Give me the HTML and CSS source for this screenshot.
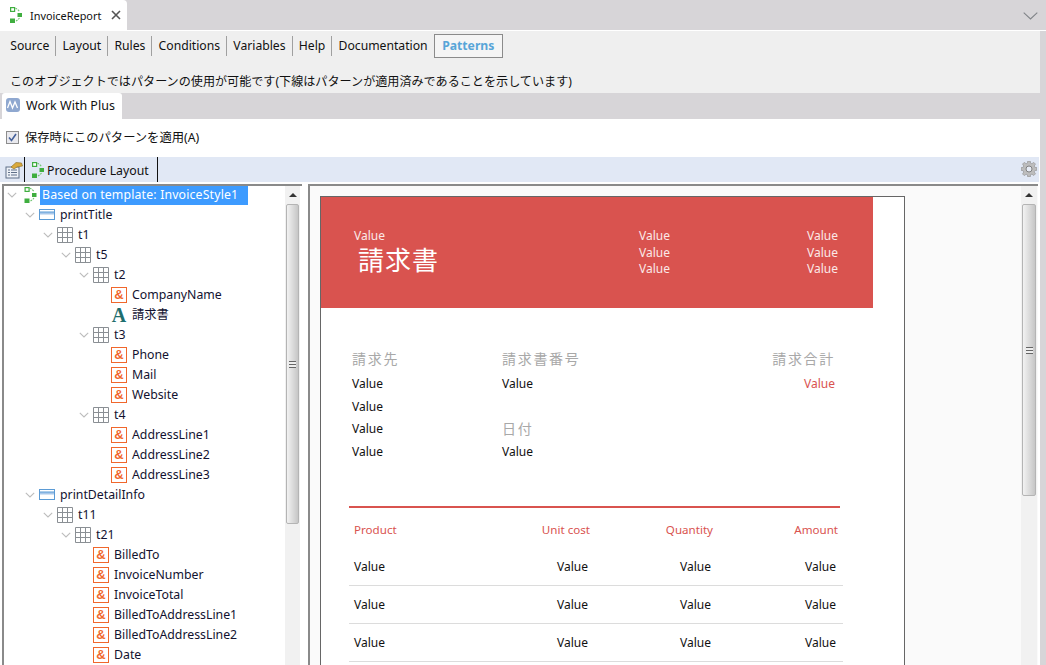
FILE: index.html
```html
<!DOCTYPE html>
<html lang="ja">
<head>
<meta charset="utf-8">
<title>InvoiceReport</title>
<link rel="stylesheet" href="styles.css">
</head>
<body>
<svg class="defs" width="0" height="0" aria-hidden="true">
  <symbol id="proc" viewBox="0 0 12 16">
    <rect x=".6" y=".6" width="4" height="3.800" fill="#fff" stroke="#3fae3f" stroke-width="1.200"/>
    <rect x="7.500" y="6" width="4.500" height="4" fill="#3fae3f"/>
    <rect x="0" y="11.500" width="5" height="4.500" fill="#3fae3f"/>
    <path d="M5.500 1.200 L7 2 M7.800 2.600 L9.200 4.200 M6 14 L7.500 13 M8.300 12.300 L9.500 11" stroke="#6fc46f" stroke-width="1.100" fill="none"/>
  </symbol>
  <symbol id="band" viewBox="0 0 16 12">
    <rect x=".5" y=".5" width="15" height="10" fill="#fff" stroke="#5b9bd5"/>
    <rect x="1" y="3" width="14" height="2.500" fill="#a9c8ea"/>
    <path d="M1 3 H15" stroke="#5b9bd5"/>
  </symbol>
  <symbol id="grid" viewBox="0 0 16 16">
    <path d="M.5.5H15.500V15.500H.5Z M5.500.5V15.500 M10.500.5V15.500 M.5 5.500H15.500 M.5 10.500H15.500" fill="#fff" stroke="#8a8f94"/>
  </symbol>
  <symbol id="chev" viewBox="0 0 10 6">
    <path d="M.8.8 L5 5 L9.200.8" fill="none" stroke="#bcbcbc" stroke-width="1.100"/>
  </symbol>
</svg>

<div class="tabstrip">
  <div class="doctab">
    <svg class="ico-proc"><use href="#proc"/></svg>
    <span>InvoiceReport</span>
    <svg class="close" viewBox="0 0 10 10"><path d="M1 1 L9 9 M9 1 L1 9" stroke="#555" stroke-width="1.600"/></svg>
  </div>
  <svg class="collapse" viewBox="0 0 15 8"><path d="M.7.7 L7.500 7 L14.300.7" fill="none" stroke="#808488" stroke-width="1.100"/></svg>
</div>

<main class="shell">
  <section class="greybox">
    <nav class="menu">
      <a class="mi">Source</a><a class="mi">Layout</a><a class="mi">Rules</a><a class="mi">Conditions</a><a class="mi">Variables</a><a class="mi">Help</a><a class="mi last">Documentation</a><a class="mi active">Patterns</a>
    </nav>
    <p class="note">このオブジェクトではパターンの使用が可能です(下線はパターンが適用済みであることを示しています)</p>
  </section>

  <div class="subtabs">
    <div class="subtab">
      <svg class="wwp" viewBox="0 0 14 14"><rect width="14" height="14" rx="3" fill="#8fa8d0"/><path d="M1.500 10 L4 3.500 L6.500 10 L9 4 L11.500 10" fill="none" stroke="#fff" stroke-width="1.300"/></svg>
      <span>Work With Plus</span>
    </div>
  </div>

  <section class="pane">
    <label class="apply">
      <svg class="check" viewBox="0 0 13 13"><rect x=".5" y=".5" width="12" height="12" fill="#e9e9ee" stroke="#8d8d8d"/><path d="M3 6.500 L5.500 9.500 L10 3" fill="none" stroke="#44609a" stroke-width="1.600"/></svg>
      <span>保存時にこのパターンを適用(A)</span>
    </label>

    <div class="toolbar">
      <div class="tool-btn">
        <svg viewBox="0 0 18 18" class="props"><rect x="1" y="6" width="13" height="11" fill="#eef2f8" stroke="#5f6f88"/><path d="M3 9H5M6 9H12M3 11.500H5M6 11.500H12M3 14H5M6 14H12" stroke="#5f6f88"/><path d="M6 6 L11 1.500 L16.500 2 L17.500 5 L12 6 L9 8Z" fill="#d9a93c" stroke="#8a6a1f" stroke-width=".6"/></svg>
      </div>
      <div class="tool-tab">
        <svg class="ico-proc"><use href="#proc"/></svg>
        <span>Procedure Layout</span>
      </div>
      <svg class="gear" viewBox="0 0 16 16"><path d="M6.800 0h2.400l.4 2.200 1.300.5L12.800 1.400l1.700 1.700-1.300 1.900.6 1.300 2.200.4v2.500l-2.200.4-.6 1.300 1.300 1.900-1.700 1.700-1.900-1.300-1.300.5L9.200 16H6.800l-.4-2.200-1.300-.5-1.900 1.300-1.700-1.700 1.300-1.900-.6-1.300L0 9.300V6.700l2.200-.4.600-1.300L1.500 3.100l1.700-1.700 1.900 1.300 1.300-.5z" fill="#bdbdbd" stroke="#8d8d8d" stroke-width=".6"/><circle cx="8" cy="8" r="3" fill="#e8edf6" stroke="#777" stroke-width=".9"/></svg>
    </div>

    <div class="split">
      <div class="tree-panel">
        <ul class="tree">
          <li class="row l0"><svg class="chev"><use href="#chev"/></svg><svg class="ico ico-root"><use href="#proc"/></svg><span class="sel">Based on template: InvoiceStyle1</span></li>
          <li class="row l1"><svg class="chev"><use href="#chev"/></svg><svg class="ico ico-band"><use href="#band"/></svg><span>printTitle</span></li>
          <li class="row l2"><svg class="chev"><use href="#chev"/></svg><svg class="ico"><use href="#grid"/></svg><span>t1</span></li>
          <li class="row l3"><svg class="chev"><use href="#chev"/></svg><svg class="ico"><use href="#grid"/></svg><span>t5</span></li>
          <li class="row l4"><svg class="chev"><use href="#chev"/></svg><svg class="ico"><use href="#grid"/></svg><span>t2</span></li>
          <li class="row l5"><i class="spacer"></i><b class="amp">&amp;</b><span>CompanyName</span></li>
          <li class="row l5"><i class="spacer"></i><b class="lit">A</b><span>請求書</span></li>
          <li class="row l4"><svg class="chev"><use href="#chev"/></svg><svg class="ico"><use href="#grid"/></svg><span>t3</span></li>
          <li class="row l5"><i class="spacer"></i><b class="amp">&amp;</b><span>Phone</span></li>
          <li class="row l5"><i class="spacer"></i><b class="amp">&amp;</b><span>Mail</span></li>
          <li class="row l5"><i class="spacer"></i><b class="amp">&amp;</b><span>Website</span></li>
          <li class="row l4"><svg class="chev"><use href="#chev"/></svg><svg class="ico"><use href="#grid"/></svg><span>t4</span></li>
          <li class="row l5"><i class="spacer"></i><b class="amp">&amp;</b><span>AddressLine1</span></li>
          <li class="row l5"><i class="spacer"></i><b class="amp">&amp;</b><span>AddressLine2</span></li>
          <li class="row l5"><i class="spacer"></i><b class="amp">&amp;</b><span>AddressLine3</span></li>
          <li class="row l1"><svg class="chev"><use href="#chev"/></svg><svg class="ico ico-band"><use href="#band"/></svg><span>printDetailInfo</span></li>
          <li class="row l2"><svg class="chev"><use href="#chev"/></svg><svg class="ico"><use href="#grid"/></svg><span>t11</span></li>
          <li class="row l3"><svg class="chev"><use href="#chev"/></svg><svg class="ico"><use href="#grid"/></svg><span>t21</span></li>
          <li class="row l4"><i class="spacer"></i><b class="amp">&amp;</b><span>BilledTo</span></li>
          <li class="row l4"><i class="spacer"></i><b class="amp">&amp;</b><span>InvoiceNumber</span></li>
          <li class="row l4"><i class="spacer"></i><b class="amp">&amp;</b><span>InvoiceTotal</span></li>
          <li class="row l4"><i class="spacer"></i><b class="amp">&amp;</b><span>BilledToAddressLine1</span></li>
          <li class="row l4"><i class="spacer"></i><b class="amp">&amp;</b><span>BilledToAddressLine2</span></li>
          <li class="row l4"><i class="spacer"></i><b class="amp">&amp;</b><span>Date</span></li>
        </ul>
        <div class="vscroll tree-scroll">
          <div class="arrow"></div>
          <div class="thumb"><div class="grip"></div></div>
        </div>
      </div>

      <div class="canvas-panel">
        <div class="canvas">
          <article class="sheet">
            <header class="banner">
              <div class="b-title">
                <div>Value</div>
                <div class="big">請求書</div>
              </div>
              <div class="b-col"><div>Value</div><div>Value</div><div>Value</div></div>
              <div class="b-col"><div>Value</div><div>Value</div><div>Value</div></div>
            </header>
            <section class="info">
              <div class="i-col i-col1">
                <h4>請求先</h4>
                <div class="v">Value</div><div class="v">Value</div><div class="v">Value</div><div class="v">Value</div>
              </div>
              <div class="i-col i-col2">
                <h4>請求書番号</h4>
                <div class="v">Value</div>
                <div class="v"></div>
                <h4 class="h-date">日付</h4>
                <div class="v">Value</div>
              </div>
              <div class="i-col i-col3">
                <h4>請求合計</h4>
                <div class="v red">Value</div>
              </div>
            </section>
            <div class="rule"></div>
            <section class="items">
              <div class="t-head">
                <div>Product</div><div class="num">Unit cost</div><div class="num">Quantity</div><div class="num">Amount</div>
              </div>
              <div class="t-row"><div>Value</div><div class="num">Value</div><div class="num">Value</div><div class="num">Value</div></div>
              <div class="t-row"><div>Value</div><div class="num">Value</div><div class="num">Value</div><div class="num">Value</div></div>
              <div class="t-row"><div>Value</div><div class="num">Value</div><div class="num">Value</div><div class="num">Value</div></div>
            </section>
          </article>
        </div>
        <div class="vscroll doc-scroll">
          <div class="arrow"></div>
          <div class="thumb"><div class="grip"></div></div>
        </div>
      </div>
    </div>
  </section>
</main>
</body>
</html>
```

FILE: styles.css
```css
* { box-sizing: border-box; }
html, body { margin: 0; padding: 0; }
body {
  width: 1046px;
  height: 665px;
  overflow: hidden;
  background: #d7d5d8;
  color: #111;
  font-family: "Noto Sans", "Noto Sans CJK JP", sans-serif;
  font-size: 12.2px;
  display: flex;
  flex-direction: column;
}
.defs { position: absolute; }

.tabstrip {
  height: 31px;
  flex: none;
  display: flex;
  justify-content: space-between;
  align-items: flex-start;
  padding-right: 8px;
  border-bottom: 1px solid #fff;
}
.doctab {
  width: 127px;
  height: 30px;
  background: #fff;
  border-top-right-radius: 4px;
  display: flex;
  align-items: center;
  padding-left: 10px;
  font-size: 10.9px;
}
.doctab .ico-proc { width: 12px; height: 16px; margin-right: 8px; flex: none; }
.close { width: 10px; height: 10px; margin-left: 10px; flex: none; }
.collapse { width: 15px; height: 8px; margin-top: 12px; }

.shell { flex: 1; display: flex; flex-direction: column; padding-right: 6px; min-height: 0; }

.greybox { height: 62px; flex: none; background: #efefef; padding: 3px 0 0 4px; }
.menu { display: flex; align-items: center; height: 24px; }
.mi {
  padding: 0 6px 0 6.2px;
  height: 20px;
  line-height: 20px;
  border-right: 1px solid #a0a0a0;
  white-space: nowrap;
}
.mi.last { border-right: 0; }
.mi.active {
  height: 24px;
  line-height: 22px;
  border: 1px solid #8b8b8b;
  background: #f5f5f5;
  color: #58a5d8;
  font-weight: 700;
  padding: 0 7.5px;
}
.note { margin: 14px 0 0 6px; line-height: 20px; white-space: nowrap; font-size: 12.1px; }

.subtabs { height: 26px; flex: none; padding-left: 2px; }
.subtab {
  width: 120px;
  height: 26px;
  background: #fff;
  border-radius: 3px 3px 0 0;
  display: flex;
  align-items: center;
  padding: 0 0 2px 4px;
  gap: 6px;
  font-size: 12.5px;
}
.wwp { width: 14px; height: 14px; flex: none; }

.pane { flex: 1; min-height: 0; background: #fff; display: flex; flex-direction: column; }
.apply { height: 38px; flex: none; display: flex; align-items: center; padding: 0 0 2px 6px; gap: 6px; font-size: 12.3px; }
.check { width: 13px; height: 13px; flex: none; }

.toolbar {
  height: 25px;
  flex: none;
  background: #e1e8f5;
  display: flex;
  align-items: stretch;
  margin-right: 1px;
}
.tool-btn {
  width: 25px;
  border-right: 1px solid #111;
  display: flex;
  align-items: center;
  padding-left: 5px;
}
.props { width: 18px; height: 18px; }
.tool-tab {
  width: 133px;
  border-right: 1px solid #111;
  display: flex;
  align-items: center;
  padding: 2px 0 0 7px;
  gap: 3px;
  font-size: 12.3px;
}
.tool-tab .ico-proc { width: 12px; height: 16px; flex: none; margin-top: -2px; }
.gear { width: 16px; height: 16px; margin: 4px 2px 0 auto; }

.split { flex: 1; min-height: 0; display: flex; padding: 2px 2px 0 2px; gap: 6px; }

.tree-panel {
  width: 300px;
  flex: none;
  display: flex;
  border-top: 2px solid #8a8a8a;
  border-left: 2px solid #8a8a8a;
  overflow: hidden;
}
.tree {
  list-style: none;
  margin: -1px 0 0 -2px;
  padding: 0;
  flex: 1;
  min-width: 0;
  overflow: hidden;
}
.row {
  height: 20px;
  display: flex;
  align-items: center;
  white-space: nowrap;
  color: #121230;
  font-size: 12.3px;
}
.row > span { margin-bottom: 2px; }
.l0 { padding-left: 1px; }
.l1 { padding-left: 19px; }
.l2 { padding-left: 37px; }
.l3 { padding-left: 55px; }
.l4 { padding-left: 73px; }
.l5 { padding-left: 91px; }
.chev { width: 10px; height: 6px; margin: 0 4px; flex: none; }
.spacer { width: 18px; flex: none; }
.ico { width: 16px; height: 16px; flex: none; margin-right: 5px; }
.ico-band { height: 12px; }
.ico-root { width: 13px; height: 16px; margin-left: 3px; margin-right: 3px; }
.row > .sel {
  background: #3d9bff;
  color: #fff;
  height: 19px;
  line-height: 18px;
  padding: 0 2px;
  margin-bottom: 0;
  width: 208px;
  display: block;
  letter-spacing: .16px;
}
.amp {
  width: 16px;
  height: 16px;
  flex: none;
  margin-right: 5px;
  border: 1px solid #f0672c;
  color: #f0672c;
  font: 700 13px/14px "Liberation Sans", sans-serif;
  text-align: center;
}
.lit {
  width: 16px;
  height: 16px;
  flex: none;
  margin-right: 5px;
  color: #1f6e6e;
  font: 700 20px/16px "Liberation Serif", serif;
  text-align: center;
}

.vscroll {
  width: 15px;
  flex: none;
  background: #f1f1f1;
  padding: 0 1px;
  display: flex;
  flex-direction: column;
}
.arrow {
  height: 18px;
  flex: none;
  display: flex;
  align-items: center;
  justify-content: center;
}
.arrow::before {
  content: "";
  border-left: 4px solid transparent;
  border-right: 4px solid transparent;
  border-bottom: 4px solid #333;
}
.thumb {
  background: linear-gradient(90deg, #f2f2f2, #dcdcdc 50%, #c6c6c6);
  border: 1px solid #b4b4b4;
  border-radius: 2px;
  display: flex;
  align-items: center;
  justify-content: center;
}
.tree-scroll { margin-right: 2px; }
.tree-scroll .thumb { height: 320px; }
.doc-scroll .thumb { height: 292px; }
.grip {
  width: 7px;
  height: 7px;
  background: repeating-linear-gradient(180deg, #666 0 1px, #eee 1px 3px);
}

.canvas-panel {
  flex: 1;
  min-width: 0;
  display: flex;
  border-top: 2px solid #8a8a8a;
  border-left: 2px solid #8a8a8a;
  overflow: hidden;
  background: #fafafa;
}
.canvas { flex: 1; min-width: 0; padding: 10px 0 0 10px; overflow: hidden; }
.doc-scroll { width: 16px; margin-right: 1px; }

.sheet {
  width: 585px;
  height: 480px;
  background: #fff;
  border: 1px solid #666;
  border-bottom: 0;
  font-size: 12px;
  overflow: hidden;
}
.banner {
  width: 552px;
  height: 111px;
  background: #d9534f;
  color: #fbe9e8;
  display: flex;
  padding: 31px 0 0 33px;
  line-height: 16.5px;
}
.b-title { width: 285px; flex: none; }
.big { font-size: 26px; line-height: 30px; color: #fff; padding-left: 4px; letter-spacing: 1px; }
.b-col { width: 168px; flex: none; }

.info { display: flex; height: 198px; padding: 39px 0 0 31px; }
.i-col { flex: none; }
.i-col1 { width: 150px; }
.i-col2 { width: 270px; }
.i-col3 { width: 63px; text-align: right; }
.info h4 { margin: 0; height: 26px; line-height: 24px; font-weight: 400; font-size: 14px; letter-spacing: 1.7px; color: #a8a8a8; white-space: nowrap; }
.v { height: 22.7px; line-height: 22.7px; color: #111; }
.red { color: #d9534f; }
.info .h-date { height: 22.7px; line-height: 21px; }

.rule { width: 491px; height: 2px; margin-left: 28px; background: #d9534f; }
.items { width: 494px; margin-left: 28px; }
.t-head, .t-row {
  display: grid;
  grid-template-columns: 160px 76px 123px 125px;
  padding-left: 5px;
}
.t-head { height: 40px; align-items: center; color: #d9534f; padding-top: 2px; font-size: 11.6px; }
.t-row { height: 38px; align-items: center; border-bottom: 1px solid #dcdcdc; }
.t-row .num { padding-right: 2px; }
.num { text-align: right; }
```
